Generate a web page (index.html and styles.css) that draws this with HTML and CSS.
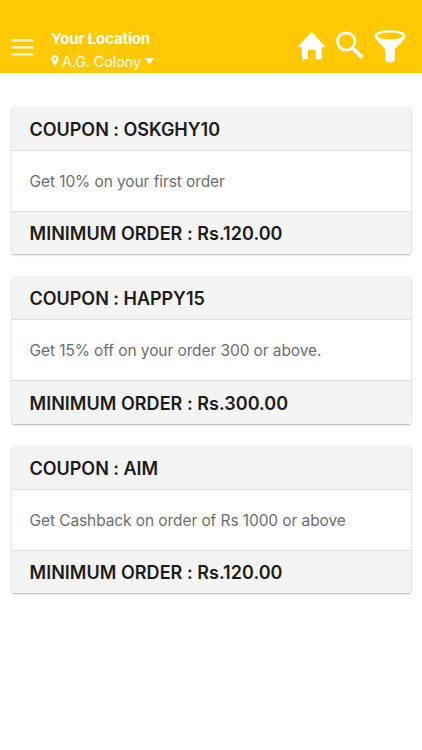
FILE: index.html
```html
<!DOCTYPE html>
<html lang="en">
<head>
<meta charset="utf-8">
<title>Coupons</title>
<link rel="stylesheet" href="styles.css">
</head>
<body>
<header class="topbar">
  <svg class="menu" width="23" height="18" viewBox="0 0 23 18"><path d="M.5 2.3h22M.5 9.3h22M.5 16.3h22" stroke="#fff" stroke-opacity=".88" stroke-width="2.2"/></svg>
  <div class="location">
    <div class="label">Your Location</div>
    <div class="place">
      <svg width="8" height="12" viewBox="0 0 8 12"><path fill="#fff" fill-rule="evenodd" d="M4 .3A3.6 3.6 0 0 0 .4 4C.4 6.2 2.5 8 4 11.7 5.5 8 7.6 6.2 7.6 4A3.6 3.6 0 0 0 4 .3ZM4 2.5a1.5 1.5 0 1 1 0 3 1.5 1.5 0 0 1 0-3Z"/></svg>
      <span>A.G. Colony</span>
      <svg width="9" height="7" viewBox="0 0 9 7"><path fill="#fff" d="M.8 0h7.4q.8 0 .4.8L5 5.8q-.5.6-1 0L.4.8Q0 0 .8 0Z"/></svg>
    </div>
  </div>
  <nav class="actions">
    <svg width="28" height="30" viewBox="0 0 28 30"><path fill="#fff" d="M13.6.8 27 15.2q.3.8-.6.8h-2.8v11.4q0 .9-.9.9h-5v-9.6h-7.9v9.6h-5q-.9 0-.9-.9V16H1q-.9 0-.5-.8Z"/></svg>
    <svg width="28" height="30" viewBox="0 0 28 30"><circle cx="10.300" cy="10.500" r="8.700" fill="none" stroke="#fff" stroke-width="2.8"/><path d="m16.500 16.800 2 2" stroke="#fff" stroke-width="2.500"/><path d="m18.300 18.700 7.800 7.800" stroke="#fff" stroke-width="4"/></svg>
    <svg width="32" height="33" viewBox="0 0 32 33"><path fill="#fff" fill-rule="evenodd" d="M16 .2c8.500 0 15.500 2.200 15.500 5.400 0 2.200-1.700 4.100-3.700 6.300-4.500 4.800-7 6.200-7 8.200V30c0 3.200-9.500 3.200-9.500 0v-9.900c0-2-2.600-3.400-7-8.200C2.200 9.700.5 7.800.5 5.600.5 2.400 7.500.2 16 .2ZM16 2.600c-7 0-12.700 1.500-12.700 3.300S9 9.200 16 9.200s12.700-1.500 12.700-3.300S23 2.600 16 2.600Z"/></svg>
  </nav>
</header>
<main class="coupons">
  <section class="card">
    <h2 class="bar">COUPON : OSKGHY10</h2>
    <p>Get 10% on your first order</p>
    <h2 class="bar foot">MINIMUM ORDER : Rs.120.00</h2>
  </section>
  <section class="card">
    <h2 class="bar">COUPON : HAPPY15</h2>
    <p>Get 15% off on your order 300 or above.</p>
    <h2 class="bar foot">MINIMUM ORDER : Rs.300.00</h2>
  </section>
  <section class="card">
    <h2 class="bar">COUPON : AIM</h2>
    <p>Get Cashback on order of Rs 1000 or above</p>
    <h2 class="bar foot">MINIMUM ORDER : Rs.120.00</h2>
  </section>
</main>
</body>
</html>
```
FILE: styles.css
```css
* { box-sizing: border-box; }
body {
  margin: 0;
  min-height: 750px;
  background: #fff;
  font-family: Inter, "Liberation Sans", sans-serif;
}
svg { display: block; flex: none; }
.topbar {
  display: flex;
  align-items: flex-start;
  height: 72.5px;
  padding: 29px 16.5px 0 11px;
  background: #ffc904;
  color: #fff;
}
.menu { margin-top: 9px; }
.location { margin: 0 0 0 17px; white-space: nowrap; }
.label {
  font-size: 15px;
  font-weight: 700;
  line-height: 20px;
  letter-spacing: -.15px;
}
.place {
  display: flex;
  align-items: center;
  gap: 3px;
  height: 24px;
  font-size: 14.5px;
  letter-spacing: -.15px;
}
.place svg:last-child { margin-left: 1px; }
.actions {
  display: flex;
  align-items: flex-start;
  gap: 10px;
  margin: 2px 0 0 auto;
}
.actions svg:last-child { margin-top: -1px; }
.coupons {
  display: flex;
  flex-direction: column;
  gap: 22.5px;
  padding: 34.5px 11px 0 11.5px;
}
.card {
  height: 147px;
  border-radius: 2.5px;
  background: #fff;
  box-shadow: 0 1px 2px rgba(0, 0, 0, .28), 0 0 2px rgba(0, 0, 0, .12);
}
.bar {
  display: flex;
  align-items: center;
  height: 43.5px;
  margin: 0;
  padding: 2px 0 0 18px;
  border-bottom: 1px solid #dedede;
  border-radius: 2.5px 2.5px 0 0;
  background: #f4f4f4;
  color: #1c1c1c;
  font-size: 18px;
  font-weight: 600;
  letter-spacing: -.03px;
}
.foot {
  border-top: 1px solid #dedede;
  border-bottom: 0;
  border-radius: 0 0 2.5px 2.5px;
  letter-spacing: .03px;
}
.card p {
  display: flex;
  align-items: center;
  height: 60px;
  margin: 0;
  padding: 1.5px 0 0 18px;
  color: #6d6d6d;
  font-size: 15.5px;
  letter-spacing: -.09px;
}
```
